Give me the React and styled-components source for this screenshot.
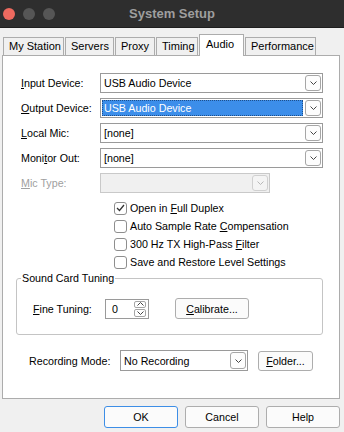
import React from "react";
import styled, { createGlobalStyle, css } from "styled-components";

const GlobalStyle = createGlobalStyle`
  html, body {
    margin: 0;
    padding: 0;
    background: #f0f0f0;
  }
  body {
    font-family: "Liberation Sans", Arial, sans-serif;
    font-size: 10.7px;
    color: #000;
  }
`;

const Window = styled.div`
  width: 344px;
  height: 432px;
  display: flex;
  flex-direction: column;
  background: #f0f0f0;
  overflow: hidden;
`;

const TitleBar = styled.div`
  height: 28px;
  flex: none;
  display: flex;
  align-items: center;
  position: relative;
  background: #2e2e2e;
  border-bottom: 1px solid #1e1e1e;
  box-sizing: border-box;
`;

const Lights = styled.div`
  display: flex;
  gap: 8px;
  padding-left: 3px;
`;

const Light = styled.span`
  width: 12px;
  height: 12px;
  border-radius: 50%;
  background: ${(p) => (p.red ? "#ee6a5f" : "#565656")};
`;

const Title = styled.div`
  position: absolute;
  left: 0;
  right: 0;
  text-align: center;
  font-size: 13px;
  font-weight: bold;
  color: #9e9e9e;
  pointer-events: none;
`;

const Body = styled.div`
  flex: 1;
  display: flex;
  flex-direction: column;
  padding: 6px 4px 0 2px;
`;

const TabStrip = styled.div`
  display: flex;
  align-items: flex-end;
  gap: 1px;
  height: 21px;
  margin-left: 1px;
  position: relative;
  z-index: 1;
`;

const Tab = styled.div`
  box-sizing: border-box;
  width: ${(p) => p.w}px;
  height: 18px;
  border: 1px solid #acacac;
  border-bottom: none;
  background: #f0f0f0;
  padding-left: 5px;
  line-height: 17px;
  font-size: 11px;
  white-space: nowrap;
  ${(p) =>
    p.active &&
    css`
      height: 22px;
      margin-bottom: -1px;
      background: #fff;
      line-height: 19px;
      padding-left: 6px;
    `}
`;

const Panel = styled.div`
  box-sizing: border-box;
  height: 344px;
  background: #fff;
  border: 1px solid #acacac;
  padding: 17px 16px 0 13px;
  display: flex;
  flex-direction: column;
`;

const Row = styled.div`
  display: flex;
  align-items: center;
  height: 20px;
  padding-left: 5px;
  margin-bottom: 5px;
`;

const Label = styled.div`
  width: ${(p) => p.w || 79}px;
  flex: none;
  white-space: nowrap;
  color: ${(p) => (p.disabled ? "#a0a0a0" : "#000")};
`;

const Key = styled.span`
  text-decoration: underline;
  text-underline-offset: 1px;
`;

const Combo = styled.div`
  box-sizing: border-box;
  ${(p) => (p.w ? `width: ${p.w}px;` : "flex: 1;")}
  height: ${(p) => p.h || 20}px;
  border: 1px solid ${(p) => (p.disabled ? "#c9c9c9" : "#9a9a9a")};
  background: ${(p) => (p.disabled ? "#f0f0f0" : "#fff")};
  display: flex;
  align-items: center;
  padding: 1px;
`;

const ComboText = styled.div`
  flex: 1;
  height: 100%;
  display: flex;
  align-items: center;
  padding-left: 2px;
  margin-right: 2px;
  box-sizing: border-box;
  ${(p) =>
    p.selected &&
    css`
      background: #3c8eea;
      color: #fff;
      outline: 1px dotted #1d4f8c;
      outline-offset: -1px;
    `}
`;

const DropButton = styled.div`
  box-sizing: border-box;
  width: 16px;
  height: 100%;
  border: 1px solid ${(p) => (p.disabled ? "#d0d0d0" : "#a6a6a6")};
  border-radius: 3px;
  background: ${(p) => (p.disabled ? "#f4f4f4" : "#fdfdfd")};
  display: flex;
  align-items: center;
  justify-content: center;
  color: ${(p) => (p.disabled ? "#b8b8b8" : "#444")};
`;

const Chevron = ({ up }) => (
  <svg width="7" height="4" viewBox="0 0 7 4">
    <path
      d={up ? "M0.5 3.5 L3.5 0.5 L6.5 3.5" : "M0.5 0.5 L3.5 3.5 L6.5 0.5"}
      fill="none"
      stroke="currentColor"
      strokeWidth="1"
    />
  </svg>
);

const Select = ({ value, selected, disabled, w, h }) => (
  <Combo disabled={disabled} w={w} h={h}>
    <ComboText selected={selected}>{value}</ComboText>
    <DropButton disabled={disabled}>
      <Chevron />
    </DropButton>
  </Combo>
);

const Checks = styled.div`
  display: flex;
  flex-direction: column;
  padding-left: 98px;
  margin-top: 1px;
`;

const CheckRow = styled.div`
  display: flex;
  align-items: center;
  height: 18px;
  gap: 3px;
`;

const Box = styled.span`
  box-sizing: border-box;
  width: 13px;
  height: 13px;
  border: 1px solid #8e8e8e;
  border-radius: 3px;
  background: #fff;
  display: flex;
  align-items: center;
  justify-content: center;
`;

const Check = ({ checked, children }) => (
  <CheckRow>
    <Box>
      {checked && (
        <svg width="9" height="8" viewBox="0 0 9 8">
          <path d="M1 4 L3.5 6.5 L8 1" fill="none" stroke="#333" strokeWidth="1.3" />
        </svg>
      )}
    </Box>
    <span>{children}</span>
  </CheckRow>
);

const Group = styled.fieldset`
  margin: 1px 0 0 0;
  padding: 13px 16px 15px 16px;
  border: 1px solid #c4c4c4;
  border-radius: 3px;
  min-width: 0;
`;

const Legend = styled.legend`
  padding: 0 1px;
  margin-left: -12px;
  line-height: 13px;
`;

const GroupRow = styled.div`
  display: flex;
  align-items: center;
  height: 21px;
`;

const Spin = styled.div`
  box-sizing: border-box;
  width: 44px;
  height: 20px;
  border: 1px solid #9a9a9a;
  display: flex;
  align-items: center;
  padding: 1px 1px 1px 6px;
`;

const SpinValue = styled.div`
  flex: 1;
`;

const SpinButtons = styled.div`
  display: flex;
  flex-direction: column;
  gap: 1px;
  height: 100%;
  margin-right: 1px;
`;

const SpinButton = styled.div`
  box-sizing: border-box;
  flex: 1;
  width: 12px;
  border: 1px solid #a6a6a6;
  border-radius: 2px;
  display: flex;
  align-items: center;
  justify-content: center;
  color: #444;
`;

const Button = styled.div`
  box-sizing: border-box;
  width: ${(p) => p.w}px;
  height: ${(p) => p.h || 22}px;
  border: 1px solid ${(p) => (p.primary ? "#3d8ee6" : "#adadad")};
  border-radius: 3px;
  background: #fbfbfb;
  display: flex;
  align-items: center;
  justify-content: center;
  margin-left: ${(p) => p.ml || 0}px;
  flex: none;
`;

const RecordRow = styled.div`
  display: flex;
  align-items: center;
  height: 21px;
  margin-top: 15px;
  padding-left: 13px;
`;

const Footer = styled.div`
  display: flex;
  justify-content: flex-end;
  gap: 7px;
  margin-top: 7px;
`;

export default function App() {
  return (
    <>
      <GlobalStyle />
      <Window>
        <TitleBar>
          <Lights>
            <Light red />
            <Light />
            <Light />
          </Lights>
          <Title>System Setup</Title>
        </TitleBar>
        <Body>
          <TabStrip>
            <Tab w={61}>My Station</Tab>
            <Tab w={49}>Servers</Tab>
            <Tab w={40}>Proxy</Tab>
            <Tab w={42}>Timing</Tab>
            <Tab w={45} active>
              Audio
            </Tab>
            <Tab w={71}>Performance</Tab>
          </TabStrip>
          <Panel>
            <Row>
              <Label>
                <Key>I</Key>nput Device:
              </Label>
              <Select value="USB Audio Device" />
            </Row>
            <Row>
              <Label>
                <Key>O</Key>utput Device:
              </Label>
              <Select value="USB Audio Device" selected />
            </Row>
            <Row>
              <Label>
                <Key>L</Key>ocal Mic:
              </Label>
              <Select value="[none]" />
            </Row>
            <Row>
              <Label>
                Moni<Key>t</Key>or Out:
              </Label>
              <Select value="[none]" />
            </Row>
            <Row>
              <Label disabled>
                <Key>M</Key>ic Type:
              </Label>
              <Select value="" disabled w={170} />
            </Row>
            <Checks>
              <Check checked>
                Open in <Key>F</Key>ull Duplex
              </Check>
              <Check>
                Auto Sample Rate <Key>C</Key>ompensation
              </Check>
              <Check>
                300 Hz TX High-Pass <Key>F</Key>ilter
              </Check>
              <Check>Save and Restore Level Settings</Check>
            </Checks>
            <Group>
              <Legend>Sound Card Tuning</Legend>
              <GroupRow>
                <Label w={72}>
                  <Key>F</Key>ine Tuning:
                </Label>
                <Spin>
                  <SpinValue>0</SpinValue>
                  <SpinButtons>
                    <SpinButton>
                      <Chevron up />
                    </SpinButton>
                    <SpinButton>
                      <Chevron />
                    </SpinButton>
                  </SpinButtons>
                </Spin>
                <Button w={74} h={21} ml={26}>
                  <span>
                    <Key>C</Key>alibrate...
                  </span>
                </Button>
              </GroupRow>
            </Group>
            <RecordRow>
              <Label w={91}>Recording Mode:</Label>
              <Select value="No Recording" w={128} h={21} />
              <Button w={55} h={20} ml={10}>
                <span>
                  <Key>F</Key>older...
                </span>
              </Button>
            </RecordRow>
          </Panel>
          <Footer>
            <Button w={74} primary>
              OK
            </Button>
            <Button w={74}>Cancel</Button>
            <Button w={74}>Help</Button>
          </Footer>
        </Body>
      </Window>
    </>
  );
}
